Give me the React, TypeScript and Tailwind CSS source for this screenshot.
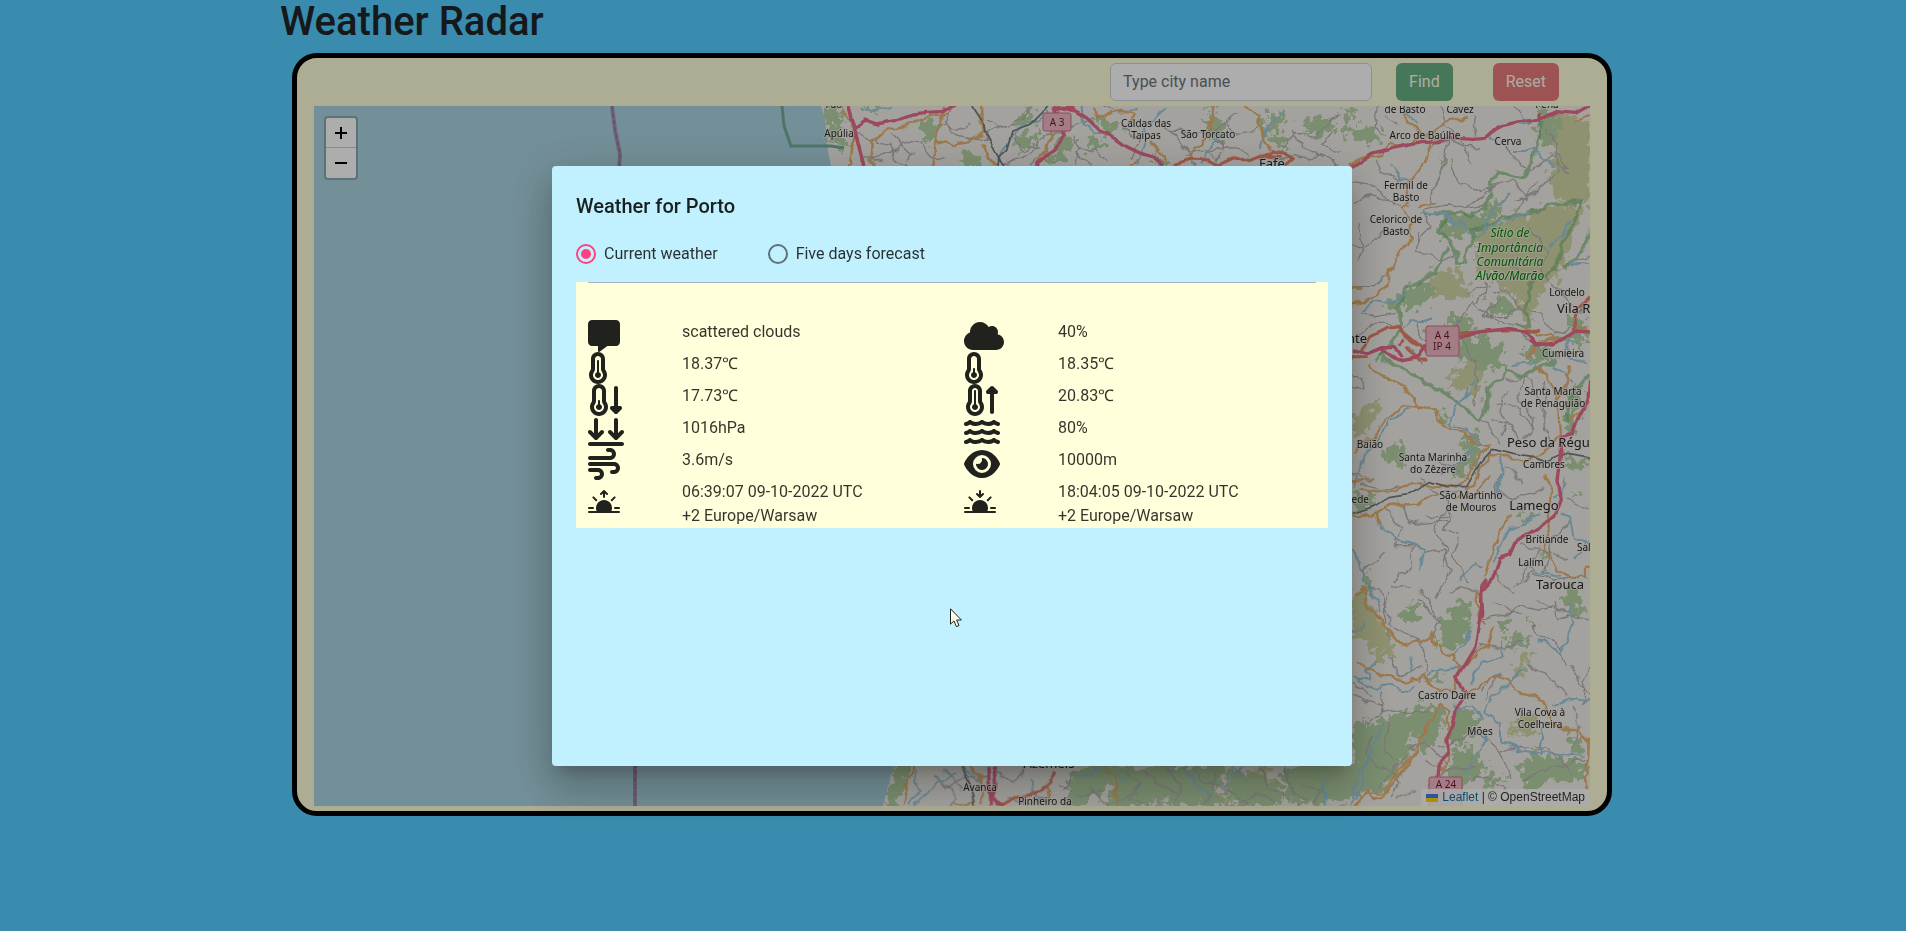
import React, { useState } from 'react';
import type { IconType } from 'react-icons';
import {
  FaMessage,
  FaTemperatureThreeQuarters,
  FaTemperatureQuarter,
  FaTemperatureArrowDown,
  FaTemperatureArrowUp,
  FaArrowsDownToLine,
  FaWind,
  FaCloud,
  FaWater,
  FaEye,
} from 'react-icons/fa6';
import { BsSunriseFill, BsSunsetFill } from 'react-icons/bs';

type Reading = { label: string; value: string; Icon: IconType; width: string };

const readings: Reading[] = [
  { label: 'Description', value: 'scattered clouds', Icon: FaMessage, width: 'w-8' },
  { label: 'Cloudiness', value: '40%', Icon: FaCloud, width: 'w-10' },
  { label: 'Temperature', value: '18.37℃', Icon: FaTemperatureThreeQuarters, width: 'w-5' },
  { label: 'Feels like', value: '18.35℃', Icon: FaTemperatureQuarter, width: 'w-5' },
  { label: 'Minimum temperature', value: '17.73℃', Icon: FaTemperatureArrowDown, width: 'w-9' },
  { label: 'Maximum temperature', value: '20.83℃', Icon: FaTemperatureArrowUp, width: 'w-9' },
  { label: 'Pressure', value: '1016hPa', Icon: FaArrowsDownToLine, width: 'w-9' },
  { label: 'Humidity', value: '80%', Icon: FaWater, width: 'w-9' },
  { label: 'Wind speed', value: '3.6m/s', Icon: FaWind, width: 'w-8' },
  { label: 'Visibility', value: '10000m', Icon: FaEye, width: 'w-9' },
  { label: 'Sunrise', value: '06:39:07 09-10-2022 UTC\n+2 Europe/Warsaw', Icon: BsSunriseFill, width: 'w-8' },
  { label: 'Sunset', value: '18:04:05 09-10-2022 UTC\n+2 Europe/Warsaw', Icon: BsSunsetFill, width: 'w-8' },
];

type Place = { x: number; y: number; lines: string[]; town?: boolean; anchor?: 'start' | 'end' };

const places: Place[] = [
  { x: 520, y: 2, lines: ['Fão'] },
  { x: 525, y: 31, lines: ['Apúlia'] },
  { x: 832, y: 21, lines: ['Caldas das', 'Taipas'] },
  { x: 894, y: 32, lines: ['São Torcato'] },
  { x: 958, y: 62, lines: ['Fafe'], town: true },
  { x: 1091, y: 7, lines: ['de Basto'] },
  { x: 1146, y: 7, lines: ['Cavez'] },
  { x: 1233, y: 2, lines: ['Pena'] },
  { x: 1111, y: 33, lines: ['Arco de Baúlhe'] },
  { x: 1194, y: 39, lines: ['Cerva'] },
  { x: 1092, y: 83, lines: ['Fermil de', 'Basto'] },
  { x: 1082, y: 117, lines: ['Celorico de', 'Basto'] },
  { x: 1253, y: 190, lines: ['Lordelo'] },
  { x: 1243, y: 207, lines: ['Vila Real'], town: true, anchor: 'start' },
  { x: 1053, y: 237, lines: ['Amarante'], town: true, anchor: 'end' },
  { x: 1249, y: 251, lines: ['Cumieira'] },
  { x: 1239, y: 289, lines: ['Santa Marta', 'de Penaguião'] },
  { x: 1056, y: 342, lines: ['Baião'] },
  { x: 1193, y: 341, lines: ['Peso da Régua'], town: true, anchor: 'start' },
  { x: 1119, y: 355, lines: ['Santa Marinha', 'do Zêzere'] },
  { x: 1230, y: 362, lines: ['Cambres'] },
  { x: 1055, y: 397, lines: ['Ancede'], anchor: 'end' },
  { x: 1157, y: 393, lines: ['São Martinho', 'de Mouros'] },
  { x: 1220, y: 404, lines: ['Lamego'], town: true },
  { x: 1233, y: 437, lines: ['Britiande'] },
  { x: 1263, y: 445, lines: ['Salzedas'], anchor: 'start' },
  { x: 1217, y: 460, lines: ['Lalim'] },
  { x: 1246, y: 483, lines: ['Tarouca'], town: true },
  { x: 1133, y: 593, lines: ['Castro Daire'] },
  { x: 1166, y: 629, lines: ['Mões'] },
  { x: 1226, y: 610, lines: ['Vila Cova à', 'Coelheira'] },
  { x: 735, y: 662, lines: ['Azeméis'], town: true },
  { x: 666, y: 685, lines: ['Avanca'] },
  { x: 731, y: 699, lines: ['Pinheiro da'] },
];

type Layer = { at: string; forest: string; scrub: string; minor: string; river: string; road: string; primary: string; motorway: string; rail: string; border: string };

/* Geometry of the map tiles, drawn at about three times their size. */
const layers: Layer[] = [
  {
    at: 'translate(466 -6) scale(0.357 0.3333)',
    forest:
      'M125 25l30-5 25 40-10 30 10 50-40-15zM388 60l20-15 25 10 5 40-15 40-20-10-12-30zM510 155l30-8 25 35 5 20h-50zM700 20l20 10-20 40-30 10-10-20zM665 110l50-20 20 10-30 40-40 15zM790 110l40 5-10 40-50 35-30-8 30-40zM890 50l50 10 20 30-40 10-35-20zM860 120l40-15 20 20-30 25-30-5zM1060 170l25 10 10 20h-45zM1180 60l40-15 25 30-10 40-30 10zM1370 40l40-5 10 15-30 45-20-10zM1370 100l40 10 25 20-30 15-40-20zM1340 70l20-8 5 30-25 10zM1460 60l60-10 40 20-20 40-60-10zM230 18l60 0-10 15-40 0zM1180 20h40l-20 12z',
    scrub: 'M350 70l20-4-5 20z',
    minor:
      'M210 90l40 30 60 10 20 60 30 10M260 170l60-20 40-20 40 5 20 30 40 10M440 80l50 5 40-20M480 20l-20 50 20 30 60 20 40-10M310 100l60 60-20 40M570 110l50-30 60-20 20-40M580 60l40 20M620 190l40-10 50-25 30-50 60-10M650 120l40 30 40-10M700 195l20-20M740 18l20 60M800 90l30-20 50-10M830 190l10-40-20-40M840 150l40 0 40 40M960 80l40 40-20 50M900 20l60 20 40-20M1090 90l50 60 30 50M1060 60l30 30 60 10 60-10M1250 60l30 40 60-10M1280 40l-60 50 20 60-20 40M1310 160l-60-20-60 20M1130 170l60-20 30 30M1400 150l50-50 50 10 40-50 30-10M1370 170l40 10 100-10 60 20M1440 90l20 50 60 40M1560 80l-40 50 50 30M230 190l20-20 40 10M830 160l40 30M1050 150l20 40',
    river: 'M230 25l40 10 50-15M740 50l-60 30-30 30-25 50-15 20M845 20l5 60 50 20M1000 190l20-50 10-60 50-60M1180 190l20-40 30-40M1350 150l10-60 50-60',
    road:
      'M175 18l35 60-10 80-10 40M470 40l-60 10-60 25-50 10-40 40-5 75M430 195l5-70 5-20 20-85M440 120l40 15 50-8 40-30-5-90M570 130l10 40 30 30M720 195l40-90 25-90M880 20l5 35 50-15 50 0-5 30M1040 120l35 50 5 30M1150 170l40-60 20-40 5-55M1300 18l35 30 20 60 20 45M980 195l20-20',
    primary: 'M1100 193l50-16 50 3 25 15 50-25 40 15 40-18 50 2M1350 172l30-18 30 5 30 18-30 20',
    motorway: 'M190 18l10 40 10 30 10 50 15 60M210 82l30-22 30 12 50-10 50-20 40-5 50-3 30-20M765 18l20 8 40 10 30 20 40 40 30 10 45 35 40 20 40 10 25 25M765 18l8 30 20 60-25 45-45 30-3 20M765 25l60 0',
    rail: 'M540 18l30 50 5 30 30 60 15 30 10 15M750 18l-50 55-50 20-15 55-20 20-5 30',
    border: '',
  },
  {
    at: 'translate(1026 -6) scale(0.3333)',
    forest:
      'M20 90l40-15 50 5 15 40-30 15-60-10-20-20zM290 390l50-45 80 0 40-40 25 20-30 60-60 10-40 20-45-10zM130 610l40-30 25 10-20 40-30-5zM190 580l60-30 40 15-30 45-60 20zM245 690l60-10 50-40 50 30-30 50-90 20zM400 710l50 0 30 50-80 20zM440 600l60-15 25 50-60 20zM540 750l70-20 60 50h-120zM600 20l60 40-15 80-50-20zM690 660l40-20 20 60-40 60zM380 730h60v50h-60zM0 50l30-20 15 20-15 30H0zM295 180l15-10 5 20-15 5z',
    scrub:
      'M610 60l60-20 80 20v260l-40-10-60 0-30-80 30-80-60-40zM400 400l70-30 70-25 100-25 95-5-30 80-40 120-60 50-30 90-40-20 20-60-70-50-60-10-10-60zM265 520l60-10 60 20-15 30 20 30-60 10-60-20zM460 540l100-30 20 60-10 40-60-30z',
    minor:
      'M36 310l60-30 70 40M36 440l60-10 40-40 60 0M60 370l10 60-20 50M100 180l20 40 60 20M115 20l-10 60 30 30M140 40l30 40M36 250l70 10 40 50 60 10M300 20l20 60 60 60 10 50M330 180l20 60 60 30 60-10M260 330l60-15 60 10 60-10M320 120l-10 80-30 60-10 60M380 320l80-60 60-20 40 60M500 140l40 60 40 10M580 210l60-50 30 40 20 20M520 300l60-20 70-60M620 90l15 20 20 50 30 40-40-10M600 240l-60 60-20 60M230 400l0 60 80 20 30-20M260 330l0 60-30 30M490 490l60 40 40-20M560 380l60 70-10 60 30 40M430 540l10 40-40 30 60 50M460 570l60 20 30 40 50 10M480 600l-40 30-10 20 90 30M400 600l-40 60-40 50M600 640l40 60 60-20 30-60M640 550l60 70M650 160l10 60M700 480l50-10M40 560l60 0 60-60M60 640l50 10 60-10M36 720l60-50 80 0M230 660l20 60 50 20M350 660l10 50 40 70M390 580l30-20 30-10M440 650l60 0 40-30M250 740l60-30 60 70M540 690l60 60M260 150l60-30 60 20 40 0M410 50l-10 60M520 20l40 50 60-20',
    river:
      'M470 130l-20-20 40-35 60-10 50-5M520 150l60 0 60 50M150 195l30 40 20 5M200 18l30 60M250 340l60 5 30 10M320 345l90 70 40-40 120-40M510 280l-60 60-20 50M690 360l-20 50-40 30M60 640l40-40 50 10 50-30M190 680l30-20 60 0M720 660l-40 60 10 50 50 20M690 490l60 0M650 710l60 15',
    road:
      'M20 200l60-30 40-5 30-30 60-10 50-20 60-40 60-15M205 20l-5 45 50 50 60 5M275 120l-20 70-40 50-25 10 10 60-15 15 30 40-10 70-30 20-25 50-15 60-60 40-40 10M240 315l50-5M36 560l40 5M550 675l50 30 50 10 90-30M560 780l20-40 60-20 60-20M700 60l50-15',
    primary: 'M60 750l30-40 50-25 40-5 15 30 40 30M180 690l60 50 20 20M360 700l60-5 60-5 60 0 60 5M700 690l10-60 40-40',
    motorway:
      'M36 203l60-40 80-22 70-13 50-3 30-12 70 5 40-3 40-35 60-15 60-5 50-25 60 5 45-25M600 62l0-22M36 750l50 10 40-20 40 0 20 30M360 713l60-18 90-10 50 10 30 35 50 5 40-25 30-20 60 4',
    rail: '',
    border:
      'M605 62l-10 50-15 60-10 40-20 25-80-25-15 50-20 60-40 25-100-5 40 0-45 45 50 45 10 60 30-5-10-30 30-30-5-40 60-15 30-20 70-10 60-10 10-25 50 10 45-15-15 60-50 100-10 50-60 25-20 40-10 60 20 40-50 0M330 440l-40 60-45 50-50 10-20 60 10 60-40 60-40 40M750 390l-20 50-60 70',
  },
  {
    at: 'translate(1026 234) scale(0.3333)',
    forest:
      'M280 20l120-20 80 20 20 70-70-10-70-30zM125 330l50-30 30 30-10 40-50 0zM300 220l30 5-5 25-30-10zM350 310l15 0 5 15-15 5zM370 290l50-10-20 100-50 30-20-10 40-60zM680 160l40-10-10 130-30-10zM660 340l90 20v20l-50 10zM530 530l30-15 20 10-40 20zM60 460l50 5-10 30-60 25v-20zM700 460l15 0-10 30zM550 680l20 15-15 0zM600 650l20-15 5 10zM700 720l30 60h-70zM80 690l15 40-10 40-15-30z',
    scrub: 'M345 90l80-40 20 10-30 110-60-30-40 10zM45 220l35-30 45-5-25 60-40 55-20-20z',
    minor:
      'M36 110l25 0 5 30-30 5M500 120l60-10 20 40 30 80M510 150l-30 60 20 40-20 40M550 120l-10 60 40 60-20 60M620 130l-10 80 20 100M470 190l60 10 50 60M450 240l60 20 50 60M130 500l50 60-10 60 60 0M180 480l20 60 60 10 70-10M320 470l10 60-20 40 50 10M160 600l60 20-10 60-50 40M250 640l60-10 20 60-40 90M320 500l-40 70 40 60-10 50M360 590l-20 60 40 80M260 530l60 0 10-40M480 400l-10 50 50 30 90-30M490 380l60 50M540 620l90 15 60 20M690 540l-50 60-30 100M740 510l-50-30M600 620l-60 100M36 400l60 20M240 420l60 40 60-5M300 370l60 30M60 430l60 20 60-10M130 640l-60 60 30 80M460 700l60 60M520 740l60-40 60 20 100-10M150 730l60 10M400 60l10 60-10 80M420 230l60 80M210 20l40 60',
    river:
      'M405 120l-30 50-35 30-10 50 50 20 40 40-60 60-60 30M210 210l-60 30-40 60-50 80-20 60M110 540l60 60 80 30-10 60M600 520l-90 50-30 40-20 60M480 350l5 50-10 60M660 520l30 10 10 60 50 20M430 680l-20-10-50 50M540 670l60 30 60 10M680 410l-10 50-30 20M620 30l20 50 60 50M36 630l30 60 30 80M740 600l-30 60M520 75l50-5 30-10',
    road:
      'M90 70l40 40 60 30 50 60-60 5-50 40-30 50-60 40M240 195l50 20 20 40 60 20 40 40 40-5-40 60-30 50-60 20-60-5-60 5-50 15-60 0-30-10M36 420l60 5M590 70l45 60 20 80 5 80-40 40-60 35-50-15-60-5-30 60-40 50M610 400l20 60-5 60 10 50-20 60 30 60 40 20 50 0 0-30 20-5M510 530l-40 60-20 60-15 60M36 530l60-5 40-25 100-10 60-30M690 80l-10 60-30 40M690 240l60-50M110 510l5 40M340 480l50-10 60-60',
    primary: 'M180 18l10-20M200 20l35 40 30 0M36 50l50 0',
    motorway: 'M36 32l50 8 40-15 50 35 60-10 20-30M570 0l20 15 50-5M749 120l-5 60-30 50-20 50-30 10 0 60-10 70 10 60-20 50-80 50-40 30-15 35-30 10-20 60-35 40 5 80',
    rail: 'M40 520l60-20 50-30 60-10 60-35 50 15 60 0 40-70 40-45 60 15 60 10 40 15 60-25 60 10 60 35',
    border: 'M120 40l10 20 80 40 60 30 80 50 70 65 20-55 0-50 50-20 10-30 50 20 40-30 60-15M740 110l-50 60-10 80',
  },
  {
    at: 'translate(1026 474) scale(0.3333)',
    forest:
      'M300 130l60-60 35 0-10 90-40 60-40-20zM180 95l60-30-5 50-40 15zM665 50l50-10 15 70-40-10zM475 120l40-10-5 40-30 0zM490 170l50-10 40 30-60 10-30 0zM555 130l30-10-5 20zM250 290l50-10 5 25-30 10zM80 440l60-30 60-10 40-10-20 60-10 60-50 50-70 60-90 60H0v-100l40-40-5-70zM205 400l60-30 60 20-60 120-30 0zM345 390l60 0 20 30-40 60-70 10zM340 500l60 0 40 60-60 60-60-20zM420 600l60-20 20 20-60 20zM540 550l60-30 60 20 60-5 25 20-40 50-80-5-60 40zM690 470l40-10-5 60-40 0zM40 420l40 0-15 50-30 10z',
    scrub: 'M36 50l30-30 30 60 60 90-5 60-40 15-30-60-45-10zM520 270l20-50 40 5-30 50zM510 430l30-20 60 10-20 30-60 20z',
    minor:
      'M60 20l60 10 30 100 100 60M150 30l-20 60 20 90M240 20l60 100-20 60M330 40l30-20 60 20M420 120l60-10 60-30 50 10 60-10M300 120l-60-60M460 60l90 50M590 60l60 30 100 30M580 130l20 40 60 30 20 60M420 190l80 20 60-40M240 190l20 60-20 50M150 230l30 60 60-30M36 350l70 20 60 30 100-10M120 330l10 60-60 50M36 310l60 40M560 250l60 40 60 60M690 260l60 80M700 380l20 60-20 60M420 460l60 60 30 80M480 520l60-20 60 5 10-80M200 510l60-20 60 60M100 470l-30 40 50 60M150 430l-20 90 50 20M420 330l60-50-40 80M580 490l60 30 60 60M550 600l60-30 130-30M430 190l-60 70M250 540l60 30 100 0M120 560l60 40-30 60M330 560l-60 60M645 60l10 60 60-20M390 600l60-10 60 60M300 500l60-20 50-40M720 380l30-20M740 260l-10 100',
    river:
      'M36 155l30-10 10-15M36 290l60 10-20-30 30-15M50 290l30 35 60-10 50 20 30-20M215 230l-5 50M395 145l-20 50-30 30M490 190l-10 40-60 20-20 40-10 20M550 250l-40 60-50 40-30 50 50 30 0 50 60 30 60 10 130 10M600 180l30 30 30 0 40-80-10-60M640 380l40-20 60 10M340 380l60 0 30 40M610 440l-10 90M130 430l-40 80-20 90-30 60M440 460l-30 60-30 60M260 285l50-20 40-5M90 20l30 70',
    road:
      'M50 50l20-25 10 50 50 50 60 75 70-20 20-20 5 40 60 30 10 30 30-10 60-60 20-50M50 245l60 30 80 30 60-20 50 45 40 10 10-50 0-30M300 370l-30 50-20 60-30 50-40 50-40 60-30 20-30-30-40 50M300 370l30 30-10 60 5 60-20 60M380 340l50-30 50-20 60 45 70 30 20 60 60 20 60 40M745 470v60l-10 60 10 40M415 40l10 100',
    primary: '',
    motorway: 'M440 0l-15 20 0 60-10 60-10 60-30 50-25 40 25 50-30 50-10 50-15 40 5 40-30 30-5 50',
    rail: '',
    border: '',
  },
  {
    at: 'translate(546 644) scale(0.357 0.3333)',
    forest:
      'M92 50l45 0-10 60-20 60H65zM590 60l60-12h50l10 40-30 40-60 40h-60l30-60zM690 48h160l20 60-40 60H690l20-60zM850 48h200l-50 60 20 60H850zM1040 60l100 20 60 60-20 28h-150zM1180 60l120-40 80 20-20 60 20 60h-180zM1380 0h170l-40 60-60 70-60-10zM600 110l60 20-20 30-60-10z',
    scrub: 'M1000 130l40 0 20 30-50 8zM1060 70l60-10 50 20-30 60-60-20z',
    minor:
      'M210 80l60 60-20 28M240 120l60-40 60 0M370 60l60 40 40-50M410 140l60 20 60-20M560 100l60 40 60-20M600 60l-30 60M640 120l60 48M740 60l40 40-20 50 60 18M800 60l30 40 60 30M860 50l40 60-20 50M930 60l40 40 60 20 60 48M1000 60l-10 60M1050 160l60-30 60 30M1120 50l20 60 60 30M1190 50l10 60 60 48M1240 100l60 20M1290 110l-20 50M720 150l60-20M980 130l-20 38M1540 10l-90 100M1560 120l-60 30',
    river:
      'M150 60l20 60-30 40M270 60l-60 50-60 60M230 60l60 60M480 90l20 60M600 80l50-5 20-20M905 55l40 50 30 25M1075 50l-60 60M720 70l30 30M1300 90l5 75M1440 0l-50 90 -20 75M300 60l40 30',
    road: 'M145 48l-10 60-10 50M310 48l30 30 0 90M260 160l60 0M685 50l10 20 20-5 5 45-10 20 10 38M1560 0l-60 70-30 60-40 0-20 0-20 38M520 100l10 60',
    primary: 'M545 65l-10 30-30 30-70 15-35 22-20 0',
    motorway: 'M358 48l5 60 5 60M375 48l5 60-10 40 30 20',
    rail: 'M285 48l25 60 10 60',
    border: '',
  },
];

function RadarMap() {
  return (
    <svg className="absolute inset-0 h-full w-full" role="img" aria-label="Map of northern Portugal">
      <defs>
        <filter id="wiggle" x="0" y="0" width="100%" height="100%">
          <feTurbulence type="fractalNoise" baseFrequency="0.07" numOctaves="2" seed="4" result="n" />
          <feDisplacementMap in="SourceGraphic" in2="n" scale="11" xChannelSelector="R" yChannelSelector="G" />
        </filter>
        <filter id="bend" x="0" y="0" width="100%" height="100%">
          <feTurbulence type="fractalNoise" baseFrequency="0.06" numOctaves="1" seed="6" result="n" />
          <feDisplacementMap in="SourceGraphic" in2="n" scale="6" xChannelSelector="R" yChannelSelector="G" />
        </filter>
        <filter id="ragged" x="0" y="0" width="100%" height="100%">
          <feTurbulence type="fractalNoise" baseFrequency="0.12" numOctaves="4" seed="9" result="n" />
          <feDisplacementMap in="SourceGraphic" in2="n" scale="26" xChannelSelector="R" yChannelSelector="G" />
        </filter>
      </defs>
      <rect width="100%" height="100%" fill="#f2efe9" />
      <g filter="url(#ragged)">
        {layers.map((l) => (
          <g key={l.at} transform={l.at}>
            <path d={l.scrub} fill="#d3d7a6" />
            <path d={l.forest} fill="#b5d3a5" />
          </g>
        ))}
      </g>
      <path d="M0 0H507L511 12 513 40 517 60 540 240 560 440 579 660 569 700H0Z" fill="#aad3df" />
      <g fill="none" strokeLinejoin="round">
        <g filter="url(#wiggle)">
          {layers.map((l) => (
            <g key={l.at} transform={l.at}>
              <path d={l.border} stroke="#78b478" strokeOpacity="0.65" strokeWidth="10" />
              <path d={l.minor} stroke="#b3b0b2" strokeWidth="4" />
              <path d={l.river} stroke="#9cc9dc" strokeWidth="6" />
              <path d={l.road} stroke="#e6b270" strokeWidth="7" />
            </g>
          ))}
        </g>
        <g filter="url(#bend)">
          {layers.map((l) => (
            <g key={l.at} transform={l.at}>
              <path d={l.rail} stroke="#777b80" strokeWidth="5" />
              <path d={l.primary} stroke="#e8846a" strokeWidth="9" />
              <path d={l.motorway} stroke="#e66c8a" strokeWidth="10" />
            </g>
          ))}
        </g>
      </g>
      <path d="M468 0L470 20 477 40H517L530 42" fill="none" stroke="#72ad98" strokeWidth="3" />
      <g fill="none">
        <path d="M298 0L301 24 306 48 305 64M321 650V700" stroke="#a692b5" strokeWidth="4" />
        <path d="M298 0L301 24 306 48 305 64M321 650V700" stroke="#8f6a92" strokeDasharray="5 2" />
      </g>
      <g fill="#f0b8c4" stroke="#cf7088">
        <rect x="729" y="7" width="28" height="18" rx="2" />
        <rect x="1112" y="220" width="33" height="30" rx="2" />
        <rect x="1115" y="671" width="33" height="32" rx="2" />
      </g>
      <g className="font-['Noto_Sans',sans-serif]" textAnchor="middle" fontSize="10" fill="#74152d">
        <text x="743" y="20">A 3</text>
        <text x="1128" y="233">A 4</text>
        <text x="1128" y="244">IP 4</text>
        <text x="1132" y="682">A 24</text>
      </g>
      <g className="font-['Noto_Sans',sans-serif]" fill="#262626" stroke="#f2efe9" strokeOpacity="0.7" strokeWidth="2" paintOrder="stroke" strokeLinejoin="round">
        {places.map((p) => (
          <text key={p.lines.join(' ') + p.y} textAnchor={p.anchor ?? 'middle'} fontSize={p.town ? 13 : 10}>
            {p.lines.map((line, i) => (
              <tspan key={line} x={p.x} y={p.y + i * 12}>
                {line}
              </tspan>
            ))}
          </text>
        ))}
        <text textAnchor="middle" fontSize="12" fontStyle="italic" fill="#008000">
          <tspan x="1196" y="131">Sítio de</tspan>
          <tspan x="1196" y="146">Importância</tspan>
          <tspan x="1196" y="160">Comunitária</tspan>
          <tspan x="1196" y="174">Alvão/Marão</tspan>
        </text>
      </g>
    </svg>
  );
}

function WeatherDialog() {
  const [mode, setMode] = useState('current');
  const radio =
    'size-5 appearance-none rounded-full border-2 border-[#5a7178] bg-clip-content p-[3px] checked:border-[#ff4081] checked:bg-[#ff4081]';
  return (
    <section
      role="dialog"
      aria-modal="true"
      aria-labelledby="dialog-title"
      className="h-[600px] w-[800px] max-w-full rounded bg-[#c1f1fe] p-6 text-black/80 shadow-[0_11px_15px_-7px_rgba(0,0,0,0.2),0_24px_38px_3px_rgba(0,0,0,0.14),0_9px_46px_8px_rgba(0,0,0,0.12)]"
    >
      <h2 id="dialog-title" className="text-xl leading-8 font-medium text-black/87">
        Weather for Porto
      </h2>
      <div className="mt-5 flex items-center gap-[50px]">
        <label className="flex items-center gap-2">
          <input type="radio" name="mode" className={radio} checked={mode === 'current'} onChange={() => setMode('current')} />
          Current weather
        </label>
        <label className="flex items-center gap-2">
          <input type="radio" name="mode" className={radio} checked={mode === 'forecast'} onChange={() => setMode('forecast')} />
          Five days forecast
        </label>
      </div>
      <div className="mt-4 bg-[#ffffdb]">
        <hr className="mx-3 border-[#b5b0bd]" />
        <dl className="grid grid-cols-2 pt-[37px]">
          {readings.map(({ label, value, Icon, width }) => (
            <div key={label} className="flex min-h-8">
              <dt className="w-1/4 self-center pl-3 text-black/87" title={label}>
                <Icon className={`h-8 ${width}`} aria-label={label} />
              </dt>
              <dd className="w-3/4 px-3 whitespace-pre-line">{value}</dd>
            </div>
          ))}
        </dl>
      </div>
    </section>
  );
}

export default function App() {
  return (
    <div className="min-h-screen bg-[#54ceff] pr-0.5 font-['Roboto',sans-serif] text-base text-[#212529]">
      <div className="mx-auto max-w-[1344px]">
        <h1 className="text-[40px] leading-[44px] font-medium">Weather Radar</h1>
        <main className="mx-3 mt-[9px] rounded-[25px] border-5 border-black bg-[#ffffdb] px-[17px] pb-[5px]">
          <form className="flex h-12 items-center justify-end pr-[31px]" onSubmit={(e) => e.preventDefault()}>
            <input
              type="text"
              aria-label="City name"
              placeholder="Type city name"
              className="mr-6 h-[38px] w-[262px] rounded-md border border-[#ced4da] bg-white px-3 pb-0.5 placeholder:text-[#6c757d]"
            />
            <button disabled className="mr-10 h-[38px] rounded-md bg-[#198754] px-[13px] text-white opacity-65">
              Find
            </button>
            <button disabled className="h-[38px] rounded-md bg-[#dc3545] px-[13px] text-white opacity-65">
              Reset
            </button>
          </form>
          <div className="relative h-[700px] overflow-hidden">
            <RadarMap />
            <div className="absolute top-2.5 left-2.5 flex flex-col overflow-hidden rounded border-2 border-[#8aa8b0] bg-white text-black">
              <button className="flex size-[30px] items-center justify-center border-b border-[#ccc]" aria-label="Zoom in">
                <svg viewBox="0 0 12 12" className="size-3" stroke="currentColor" strokeWidth="2">
                  <path d="M6 0V12M0 6H12" />
                </svg>
              </button>
              <button className="flex size-[30px] items-center justify-center" aria-label="Zoom out">
                <svg viewBox="0 0 12 12" className="size-3" stroke="currentColor" strokeWidth="2">
                  <path d="M0 6H12" />
                </svg>
              </button>
            </div>
            <div className="absolute right-0 bottom-0 flex items-center gap-1 bg-white/80 px-[5px] font-['Liberation_Sans',sans-serif] text-xs leading-[17px] text-[#333]">
              <svg viewBox="0 0 12 8" className="h-2 w-3" aria-hidden="true">
                <path fill="#4c7be1" d="M0 0h12v4H0z" />
                <path fill="#ffd500" d="M0 4h12v4H0z" />
              </svg>
              <span>
                <a href="#leaflet" className="text-[#0078a8]">
                  Leaflet
                </a>{' '}
                | © OpenStreetMap
              </span>
            </div>
          </div>
        </main>
      </div>
      <div className="fixed inset-0 flex items-center justify-center bg-black/32 pr-0.5">
        <WeatherDialog />
        <svg viewBox="0 0 12 20" className="absolute top-[608px] left-[950px] h-5 w-3" aria-hidden="true">
          <path d="M.5.8V16.2L4 12.9 6.4 18.6 9 17.5 6.6 12H11.4Z" fill="#fffbe6" stroke="#222" />
        </svg>
      </div>
    </div>
  );
}
